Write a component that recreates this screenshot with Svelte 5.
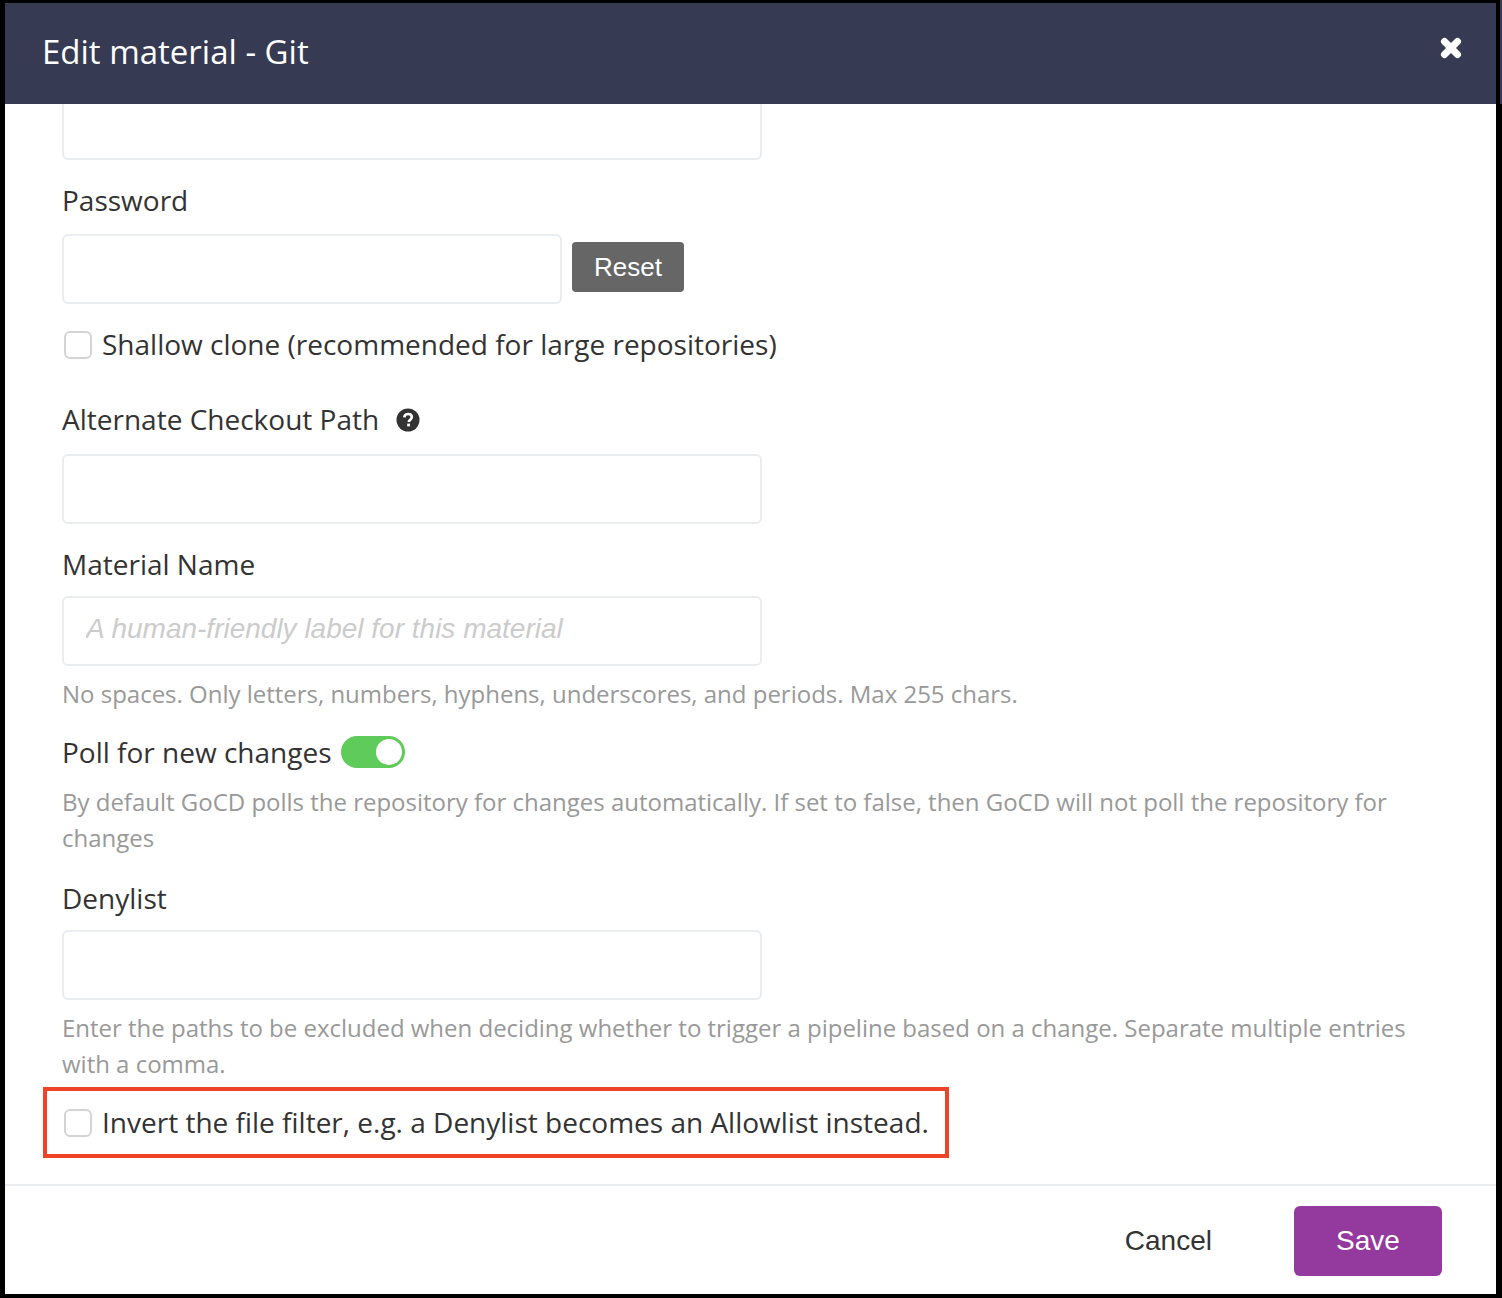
<script>
  let poll = $state(true)
</script>

<div class="frame">
  <div class="modal">
    <header class="head">
      <h1>Edit material - Git</h1>
      <button class="close" type="button" aria-label="Close">
        <svg viewBox="0 0 24 24" width="24" height="24"><path d="M5.5 5.5 L18.5 18.5 M18.5 5.5 L5.5 18.5" stroke="#fff" stroke-width="7" stroke-linecap="round" /></svg>
      </button>
    </header>

    <div class="body">
      <div class="scroll">
        <input class="input wide" type="text" />

        <label class="label pw" for="pw">Password</label>
        <div class="pw-row">
          <input class="input narrow" id="pw" type="password" />
          <button class="reset" type="button">Reset</button>
        </div>

        <label class="check shallow">
          <input type="checkbox" />
          <span>Shallow clone (recommended for large repositories)</span>
        </label>

        <div class="label alt">
          Alternate Checkout Path
          <svg class="help" viewBox="0 0 24 24" width="24" height="24">
            <circle cx="12" cy="12" r="11.5" fill="#333" />
            <path d="M8.3 9.4c.2-2.2 1.8-3.4 3.8-3.4 2.1 0 3.7 1.2 3.7 3.1 0 2.6-3 2.7-3 4.9" fill="none" stroke="#fff" stroke-width="2.6" />
            <rect x="11.2" y="15.6" width="2.8" height="2.8" fill="#fff" />
          </svg>
        </div>
        <input class="input wide" type="text" />

        <label class="label name" for="name">Material Name</label>
        <input class="input wide" id="name" type="text" placeholder="A human-friendly label for this material" />
        <p class="hint one">No spaces. Only letters, numbers, hyphens, underscores, and periods. Max 255 chars.</p>

        <div class="poll">
          <span class="label-text">Poll for new changes</span>
          <button class="toggle" class:on={poll} type="button" aria-label="Poll for new changes" onclick={() => (poll = !poll)}><i></i></button>
        </div>
        <p class="hint two">By default GoCD polls the repository for changes automatically. If set to false, then GoCD will not poll the repository for changes</p>

        <label class="label deny" for="deny">Denylist</label>
        <input class="input wide" id="deny" type="text" />
        <p class="hint three">Enter the paths to be excluded when deciding whether to trigger a pipeline based on a change. Separate multiple entries with a comma.</p>

        <div class="callout">
          <label class="check">
            <input type="checkbox" />
            <span>Invert the file filter, e.g. a Denylist becomes an Allowlist instead.</span>
          </label>
        </div>
      </div>
    </div>

    <footer class="foot">
      <button class="cancel" type="button">Cancel</button>
      <button class="save" type="button">Save</button>
    </footer>
  </div>
  <div class="edge"></div>
</div>

<style>
  :global(body) {
    margin: 0;
    background: #000;
  }

  .frame {
    position: relative;
    box-sizing: border-box;
    width: 1502px;
    height: 1298px;
    padding: 3px 6px 4px 5px;
    font-family: "Open Sans", sans-serif;
    color: #333;
  }

  /* sliver of the page showing past the window edge */
  .edge {
    position: absolute;
    top: 0;
    right: 0;
    width: 2px;
    height: 104px;
    background: #363a53;
  }

  .modal {
    display: flex;
    flex-direction: column;
    height: 100%;
    background: #fff;
  }

  .head {
    flex: none;
    display: flex;
    align-items: center;
    justify-content: space-between;
    height: 101px;
    padding: 0 33px 0 37px;
    box-sizing: border-box;
    background: #363a53;
  }

  .head h1 {
    margin: 0 0 3px;
    color: #fff;
    font-size: 33px;
    font-weight: 400;
    line-height: 44px;
  }

  .close {
    display: flex;
    margin: 0 0 11px;
    padding: 0;
    border: 0;
    background: none;
  }

  .body {
    flex: 1;
    min-height: 0;
    overflow: hidden;
  }

  .scroll {
    margin-top: -14px;
    padding: 0 57px;
  }

  .input {
    display: block;
    box-sizing: border-box;
    height: 70px;
    padding: 4px 22px 0;
    border: 2px solid #e9edf0;
    border-radius: 6px;
    background: #fff;
    outline: none;
  }

  .wide {
    width: 700px;
  }

  .narrow {
    width: 500px;
  }

  .input::placeholder {
    color: #ccc;
    font: italic 28px "Liberation Sans", Arial, sans-serif;
    opacity: 1;
  }

  .label,
  .label-text {
    display: block;
    font-size: 28px;
    line-height: 34px;
    padding-bottom: 2px;
  }

  .pw {
    margin-top: 23px;
  }

  .pw-row {
    display: flex;
    align-items: flex-start;
    gap: 10px;
    margin-top: 15px;
  }

  .reset {
    width: 112px;
    height: 50px;
    margin-top: 8px;
    padding: 0;
    border: 0;
    border-radius: 4px;
    background: #666;
    color: #fff;
    font: 26px "Liberation Sans", Arial, sans-serif;
  }

  .check {
    display: flex;
    align-items: center;
    gap: 10px;
    font-size: 28px;
    line-height: 34px;
  }

  .check span {
    padding-bottom: 2px;
  }

  .check input {
    appearance: none;
    flex: none;
    box-sizing: border-box;
    width: 28px;
    height: 28px;
    margin: 0 0 0 2px;
    border: 2px solid #d4d4d4;
    border-radius: 6px;
    background: #fff;
  }

  .shallow {
    margin-top: 23px;
  }

  .alt {
    display: flex;
    align-items: center;
    gap: 17px;
    margin-top: 39px;
    margin-bottom: 16px;
  }

  .help {
    margin-top: 2px;
  }

  .name {
    margin-top: 23px;
    margin-bottom: 13px;
  }

  .hint {
    margin: 0;
    color: #999;
    font-size: 24px;
    line-height: 36px;
    letter-spacing: -0.01px;
  }

  .one {
    margin-top: 10px;
  }

  .poll {
    display: flex;
    align-items: center;
    gap: 9px;
    margin-top: 23px;
  }

  .toggle {
    display: flex;
    align-items: center;
    justify-content: flex-start;
    box-sizing: border-box;
    width: 64px;
    height: 32px;
    margin-bottom: 2px;
    padding: 0 3px;
    border: 0;
    border-radius: 16px;
    background: #ccc;
  }

  .toggle.on {
    justify-content: flex-end;
    background: #5fcb5a;
  }

  .toggle i {
    width: 26px;
    height: 26px;
    border-radius: 50%;
    background: #fff;
  }

  .two {
    margin-top: 13px;
    width: 1360px;
  }

  .deny {
    margin-top: 25px;
    margin-bottom: 13px;
  }

  .three {
    margin-top: 10px;
    width: 1360px;
  }

  .callout {
    box-sizing: border-box;
    width: 906px;
    height: 71px;
    margin: 5px 0 0 -19px;
    padding: 0 15px;
    border: 4px solid #ef4327;
    display: flex;
    align-items: center;
  }

  .foot {
    flex: none;
    box-sizing: border-box;
    display: flex;
    align-items: center;
    justify-content: flex-end;
    gap: 82px;
    height: 110px;
    padding: 2px 54px 0 0;
    border-top: 2px solid #e9edf0;
  }

  .cancel,
  .save {
    padding: 0;
    border: 0;
    font: 28px "Liberation Sans", Arial, sans-serif;
  }

  .cancel {
    background: none;
    color: #333;
  }

  .save {
    width: 148px;
    height: 70px;
    border-radius: 6px;
    background: #943a9e;
    color: #fff;
  }
</style>
